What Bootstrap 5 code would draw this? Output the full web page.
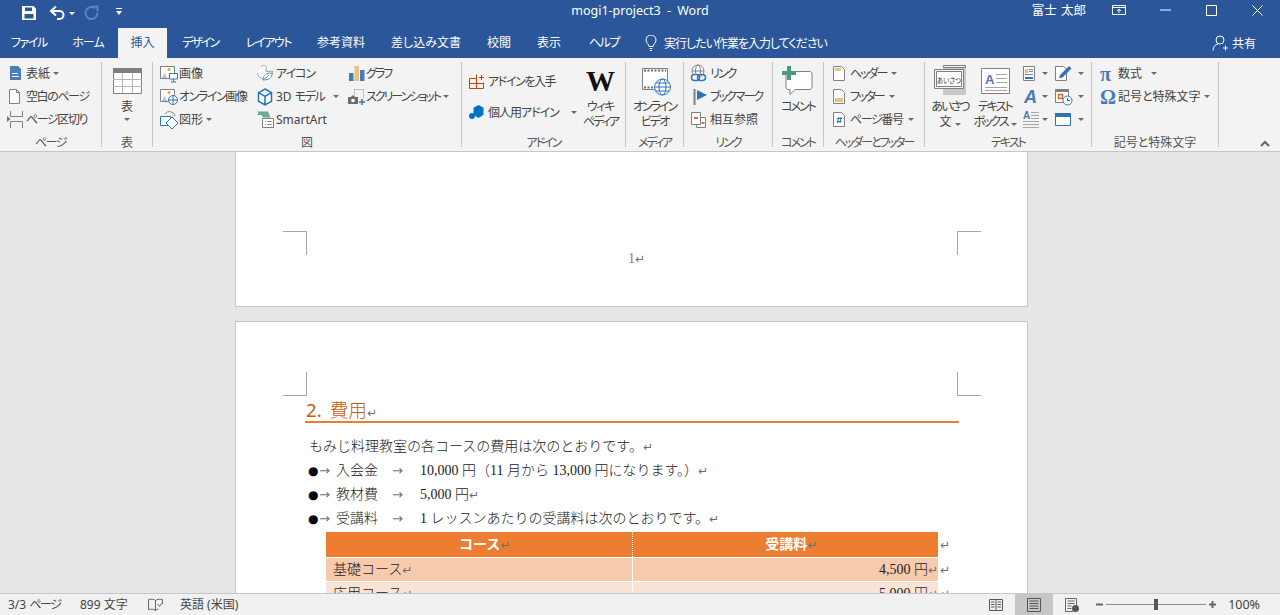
<!DOCTYPE html>
<html lang="ja">
<head>
<meta charset="utf-8">
<title>mogi1-project3 - Word</title>
<link href="https://cdn.jsdelivr.net/npm/bootstrap@5.3.0/dist/css/bootstrap.min.css" rel="stylesheet">
<style>
html,body{height:100%;overflow:hidden}
body{font-family:"Noto Sans","Noto Sans CJK JP",sans-serif;font-size:12px;line-height:15px;color:#444;font-feature-settings:"palt";background:#e6e6e6}
svg{display:block;flex-shrink:0}
.tk1{letter-spacing:-1px}.tk{letter-spacing:-1.4px}.tk2{letter-spacing:-2px}
.app-shell{height:615px}
.title-bar{height:28px;background:#2b579a;color:#fff;padding-bottom:8px}
.side-part{flex:1 1 0}
.qat-save{margin-left:21px;margin-right:12px;margin-top:6px}
.qat-undo{margin-right:3px;margin-top:6px}
.qat-redo{margin-left:9px;margin-right:17px;margin-top:6px}
.dd.dd-w{border-top-color:#fff;margin-top:6px}
.qat-more{margin-top:4px}
.title-text{font-size:12.5px;word-spacing:3px;color:#fff}
.user-name{font-size:12.5px;margin-right:10px;word-spacing:1px;font-feature-settings:normal}
.win-btn{width:46px;height:20px}
.tab-bar{height:30px;background:#2b579a;color:#fff}
.rtab{color:#fff;height:30px;line-height:30px;text-align:center;font-size:12px}
.rtab.on{background:#f3f3f3;color:#2b579a}
.tw58{width:58px}.tw60{width:60px}.tw49{width:49px}.tw66{width:66px}.tw71{width:71px}.tw74{width:74px}.tw96{width:96px}.tw50{width:50px}
.tell-me{margin-left:11px;gap:7px}
.share{margin-right:24px;gap:4px}
.ribbon{height:94px;background:#f3f3f3;border-bottom:1px solid #c6c6c6;padding-top:4px}
.rg{height:85px;border-right:1px solid #c6c6c6;flex-shrink:0}
.rg-body{flex:1 1 auto;min-height:0}
.rg-body>*{flex-shrink:0}
.rg-lbl{height:11px;line-height:14px;text-align:center;color:#555;font-size:12px;white-space:nowrap}
.g1{width:102px}.g2{width:51px}.g3{width:309px}.g4{width:164px}
.g5{width:58px}.g6{width:89px}.g7{width:51px}.g8{width:101px}.g9{width:167px}.g10{width:127px}
.g1>.rg-body,.g3>.rg-body,.g4>.rg-body{padding-left:7px}
.g6>.rg-body{padding-left:6px}
.g8>.rg-body{padding-left:9px}
.g10>.rg-body{padding-left:8px}
.ri{height:23px;white-space:nowrap}
.dd{display:inline-block;width:0;height:0;border-left:3px solid transparent;border-right:3px solid transparent;border-top:3px solid #6a6a6a;flex-shrink:0}
.col-a{width:97px}.col-b{width:91px}
.dd-5{margin-left:5px}.dd-9{margin-left:9px}.dd-3{margin-left:3px}.dd-7{margin-left:7px}.dd-1{margin-left:1px}
.big-ic{height:37px}
.rb-txt{text-align:center;white-space:nowrap}
.addin-left{width:117px}
.addin-row1{height:38px}
.addin-row2{height:24px}
.addin-gap{margin-right:4px}
.addin-dd{margin-left:12px}
.addin-w{width:29px}
.w-glyph{font-family:"Liberation Serif",serif;font-weight:700;font-size:29px;line-height:36px;color:#111;font-feature-settings:normal}
.text-a{width:50px}.text-b{width:40px;margin-right:8px}.text-c{width:32px}.text-d{width:28px}
.sym{width:18px;font-family:"Liberation Serif",serif;font-weight:700;font-size:20px;color:#4a7ab5;line-height:20px;font-feature-settings:normal}
.doc-area{flex:1 1 0;min-height:0;overflow:hidden;background:#e6e6e6;padding-right:17px}
.doc-page{width:793px;background:#fff;border:1px solid #c6c6c6;flex-shrink:0;margin-left:auto;margin-right:auto}
.page-one{height:155px;border-top:0;padding-top:79px}
.page-two{margin-top:14px;padding-top:50px;color:#222;height:400px}
.crop-row{padding:0 46px 0 47px}
.crop{width:24px;height:24px}
.crop.tl{border-top:1px solid #a6a6a6;border-right:1px solid #a6a6a6}
.crop.tr{border-top:1px solid #a6a6a6;border-left:1px solid #a6a6a6}
.crop.bl{border-bottom:1px solid #a6a6a6;border-right:1px solid #a6a6a6}
.crop.br{border-bottom:1px solid #a6a6a6;border-left:1px solid #a6a6a6}
.foot-num{font-family:"Liberation Serif","Noto Sans CJK JP",serif;font-size:14px;color:#808080;margin-top:-3px;padding-left:392px;line-height:14px}
.pm{font-family:"DejaVu Sans",sans-serif;font-size:12px;line-height:1;color:#6f6f6f;font-feature-settings:normal;font-weight:400}
.sheet{margin-left:69px;width:654px;font-family:"Liberation Serif","Noto Sans CJK JP",serif;font-size:14px;font-feature-settings:normal;font-weight:300}
.doc-h{height:27px;border-bottom:2px solid #ed7d31;color:#c55a11;font-size:18.67px;line-height:28px;white-space:nowrap;font-family:"Noto Sans","Noto Sans CJK JP",sans-serif;padding-left:1px}
.h-num{margin-right:8px;font-weight:400}
.doc-line{height:24px;line-height:24px;white-space:nowrap;padding-left:1px}
.first-line{margin-top:12px;padding-left:4px}
.bul{width:13px;padding-left:2px;color:#000;font-size:12px;font-family:"DejaVu Sans",sans-serif;font-weight:400}
.arr{width:17px;line-height:24px;font-size:13px}
.tab-arr{margin-left:14px;width:28px;line-height:24px;font-size:13px}
.fee-table{margin:1px 0 0 21px;width:632px;table-layout:fixed;font-size:14px}
.fee-table.table>:not(caption)>*>*{padding:0 7px;border:0;box-shadow:none;height:24px;line-height:21px;color:#222;vertical-align:middle}
.fee-table.table>:not(caption)>*>.c2.text-end{padding-right:0}
.fee-table .c1{width:306px;border-right:1px solid #fff!important}
.fee-table .c2{width:306px}
.fee-table .c3{width:20px;padding:0 2px!important;--bs-table-bg:#fff}
.fee-table .hd{--bs-table-bg:#ed7d31}
.fee-table.table>:not(caption)>.hd>th{color:#fff;font-weight:700;text-align:center;height:25px;border-bottom:1px solid #fff;padding-left:19px}
.fee-table.table>:not(caption)>.hd>.c1{border-right:1px dotted #fff!important}
.fee-table.table>:not(caption)>.hd>.c3{border-bottom:0;font-weight:400;text-align:left}
.fee-table .r1{--bs-table-bg:#f7caac}
.fee-table .r2{--bs-table-bg:#fbe4d5}
.fee-table.table>:not(caption)>.r1>td{border-bottom:1px solid #fff}
.fee-table.table>:not(caption)>.r1>.c3{border-bottom:0}
.status-bar{height:22px;flex-shrink:0;background:#f1f1f1;border-top:1px solid #c6c6c6;color:#444;font-size:12px}
.s-a{margin-left:8px;width:72px}.s-b{width:68px}.s-c{width:32px}
.view-a{margin-right:12px}
.view-on{width:38px;height:21px;background:#c6c6c6}
.view-c{margin:0 17px 0 12px}
.zoom-track{width:100px;height:1px;background:#8a8a8a;margin:0 3px}
.zoom-thumb{width:4px;height:11px;background:#555;margin-left:48px;margin-top:-5px}
.zoom-val{margin-left:12px;margin-right:20px;font-size:12.5px}
.up-btn{padding-right:10px;height:85px}
</style>
</head>
<body>
<div class="app-shell d-flex flex-column">

<div class="title-bar d-flex align-items-center">
  <div class="side-part d-flex align-items-center">
    <svg class="qat-save" width="16" height="16" viewBox="0 0 16 16"><path fill="#fff" fill-rule="evenodd" d="M1 1h11.5L15 3.5V15H1zM4 2.5V6h7V2.5zM3.5 9v4.5h9V9z"/></svg>
    <svg class="qat-undo" width="17" height="16" viewBox="0 0 17 16"><path d="M3 6h7.5a4 4 0 0 1 0 8H8" fill="none" stroke="#fff" stroke-width="2"/><path d="M7 1.5 2 6l5 4.5" fill="none" stroke="#fff" stroke-width="2"/></svg>
    <span class="dd dd-w"></span>
    <svg class="qat-redo" width="15" height="16" viewBox="0 0 15 16"><path d="M11 3.2A6 6 0 1 0 13.5 8" fill="none" stroke="#5f83ba" stroke-width="2"/><path d="M8.5 1.5h5v5" fill="none" stroke="#5f83ba" stroke-width="2"/></svg>
    <svg class="qat-more" width="6" height="8" viewBox="0 0 6 8"><path d="M0 .5h6" stroke="#fff"/><path d="M0 3h6L3 7z" fill="#fff"/></svg>
  </div>
  <div class="title-text">mogi1-project3 - Word</div>
  <div class="side-part d-flex align-items-center justify-content-end">
    <span class="user-name">富士 太郎</span>
    <div class="win-btn d-flex align-items-center justify-content-center"><svg width="14" height="11" viewBox="0 0 14 11"><path d="M.5.5h13v9H.5zM.5 2.5h13M7 8V4.5M5 6l2-2 2 2" fill="none" stroke="#fff"/></svg></div>
    <div class="win-btn d-flex align-items-center justify-content-center"><svg width="11" height="2" viewBox="0 0 11 2"><path d="M0 1h11" stroke="#fff"/></svg></div>
    <div class="win-btn d-flex align-items-center justify-content-center"><svg width="11" height="11" viewBox="0 0 11 11"><path d="M.5.5h10v10H.5z" fill="none" stroke="#fff"/></svg></div>
    <div class="win-btn d-flex align-items-center justify-content-center"><svg width="11" height="11" viewBox="0 0 11 11"><path d="M.5.5l10 10M10.5.5l-10 10" fill="none" stroke="#fff"/></svg></div>
  </div>
</div>

<div class="tab-bar d-flex align-items-center">
  <div class="rtab tw58 tk">ファイル</div>
  <div class="rtab tw60 tk1">ホーム</div>
  <div class="rtab tw49 on">挿入</div>
  <div class="rtab tw66 tk2">デザイン</div>
  <div class="rtab tw71 tk">レイアウト</div>
  <div class="rtab tw74">参考資料</div>
  <div class="rtab tw96">差し込み文書</div>
  <div class="rtab tw50">校閲</div>
  <div class="rtab tw50">表示</div>
  <div class="rtab tw60 tk">ヘルプ</div>
  <div class="tell-me d-flex align-items-center">
    <svg width="12" height="16" viewBox="0 0 12 16"><path d="M4 11.5C4 9 1 8.500 1 5a5 5 0 0 1 10 0c0 3.500-3 4-3 6.500zM4.500 13.500h3M5 15.500h2" fill="none" stroke="#fff"/></svg>
    <span class="tk1">実行したい作業を入力してください</span>
  </div>
  <div class="ms-auto share d-flex align-items-center">
    <svg width="16" height="16" viewBox="0 0 16 16"><circle cx="8" cy="5" r="4" fill="none" stroke="#fff"/><path d="M1 15.500c0-4 2.500-6 5-6.500M11 13h5M13.500 10.500v5" fill="none" stroke="#fff"/></svg>
    <span>共有</span>
  </div>
</div>

<div class="ribbon d-flex align-items-start">

  <div class="rg g1 d-flex flex-column">
    <div class="rg-body">
      <div class="ri d-flex align-items-center">
        <svg width="19" height="20" viewBox="0 0 19 20"><path d="M3 2h8l3 3v11H3z" fill="#4a7ebb"/><path d="M5 9l1 1 1-1 1 1 1-1 1 1 1-1M5 12.500h7" fill="none" stroke="#fff"/></svg>
        <span>表紙</span><span class="dd dd-3"></span>
      </div>
      <div class="ri d-flex align-items-center">
        <svg width="19" height="20" viewBox="0 0 19 20"><path d="M2.500 2.500h7l3 3v11h-10z" fill="#fff" stroke="#7f7f7f"/><path d="M9.500 2.500v3h3" fill="none" stroke="#7f7f7f"/></svg>
        <span class="tk">空白のページ</span>
      </div>
      <div class="ri d-flex align-items-center">
        <svg width="19" height="20" viewBox="0 0 19 20"><path d="M3.500 1v5.500h12V1M3.500 18v-6.500h12V18" fill="none" stroke="#7f7f7f"/><path d="M0 6l3.500 3L0 12z" fill="#4a7ebb"/></svg>
        <span class="tk">ページ区切り</span>
      </div>
    </div>
    <div class="rg-lbl tk">ページ</div>
  </div>

  <div class="rg g2 d-flex flex-column align-items-center">
    <div class="rg-body d-flex flex-column align-items-center">
      <div class="big-ic d-flex align-items-center">
        <svg width="29" height="26" viewBox="0 0 29 26"><path d="M.5.500h28v25H.5z" fill="#fff" stroke="#808080"/><path d="M0 0h29v5H0z" fill="#7f7f7f"/><path d="M0 11.500h29M0 18.500h29M9.500 5v20M19.500 5v20" stroke="#b5b5b5"/></svg>
      </div>
      <div class="rb-txt">表</div>
      <span class="dd mt-1"></span>
    </div>
    <div class="rg-lbl">表</div>
  </div>

  <div class="rg g3 d-flex flex-column">
    <div class="rg-body d-flex">
      <div class="col-a">
        <div class="ri d-flex align-items-center">
          <svg width="19" height="20" viewBox="0 0 19 20"><path d="M.5 2.500h14v12H.5z" fill="#fff" stroke="#808080"/><circle cx="9" cy="5.500" r="1.500" fill="#e8a23c"/><path d="M2 14l2.500-5 2.500 5z" fill="#a9c4e4"/><path d="M9.500 9.500h8v5.500h-8z" fill="#fff" stroke="#2e75b6"/><path d="M13.500 15v2.500M11 18h5" stroke="#2e75b6"/></svg>
          <span>画像</span>
        </div>
        <div class="ri d-flex align-items-center">
          <svg width="19" height="20" viewBox="0 0 19 20"><path d="M.5 2.500h14v12H.5z" fill="#fff" stroke="#808080"/><circle cx="9" cy="5.500" r="1.500" fill="#e8a23c"/><path d="M2 14l2.500-5 2.500 5z" fill="#a9c4e4"/><circle cx="13" cy="13" r="4.500" fill="#fff" stroke="#2e75b6"/><path d="M8.500 13h9M13 8.500v9" stroke="#2e75b6"/></svg>
          <span class="tk">オンライン画像</span>
        </div>
        <div class="ri d-flex align-items-center">
          <svg width="19" height="20" viewBox="0 0 19 20"><path d="M5 4a5.500 5.500 0 0 1 10 2" fill="none" stroke="#8a8a8a"/><path d="M.5 6.500h10v9H.5z" fill="#fff" stroke="#2e75b6"/><path d="M12 7l6 6-6 6-6-6z" fill="#fff" stroke="#2e75b6"/></svg>
          <span>図形</span><span class="dd dd-3"></span>
        </div>
      </div>
      <div class="col-b">
        <div class="ri d-flex align-items-center">
          <svg width="19" height="20" viewBox="0 0 19 20"><path d="M4 3a3 3 0 0 1 5.500 1c0 1-1 2-1 3 2 1 5 .500 7 0 0 5-2 8-7 8-5 0-8-3-8-6" fill="#fff" stroke="#8a8a8a" stroke-dasharray="2 .6"/><path d="M6 16c0-5 3-7 9-7 0 5-3 7-9 7zM6 16l6-5" fill="#fff" stroke="#6b97a8"/></svg>
          <span class="tk1">アイコン</span>
        </div>
        <div class="ri d-flex align-items-center">
          <svg width="19" height="20" viewBox="0 0 19 20"><path d="M8 2l6.500 3.700v8.600L8 18l-6.500-3.700V5.700zM1.500 5.700L8 9.500l6.500-3.800M8 9.500V18" fill="#fff" stroke="#1e73be" stroke-width="1.500"/></svg>
          <span>3D <span class="tk">モデル</span></span><span class="dd dd-9"></span>
        </div>
        <div class="ri d-flex align-items-center">
          <svg width="19" height="20" viewBox="0 0 19 20"><path d="M0 1.500h11l2.500 6H6L4.500 5H0l1.500-2z" fill="#6fa98f"/><path d="M5.500 8.500h11v9h-11z" fill="#fff" stroke="#808080"/><path d="M8 11.500h1M8 14.500h1M10.500 11.500h4M10.500 14.500h4" stroke="#808080"/></svg>
          <span>SmartArt</span>
        </div>
      </div>
      <div>
        <div class="ri d-flex align-items-center">
          <svg width="18" height="20" viewBox="0 0 18 20"><path d="M1 9h4.500v8H1zM12 6h4.500v11H12z" fill="#4a7ab5"/><path d="M6.500 2H11v15H6.500z" fill="#e8c27e"/></svg>
          <span class="tk2">グラフ</span>
        </div>
        <div class="ri d-flex align-items-center">
          <svg width="18" height="20" viewBox="0 0 18 20"><path d="M6.500 2.500h9v9" fill="none" stroke="#8a8a8a" stroke-dasharray="1 1"/><path d="M6.500 2.500v6" stroke="#8a8a8a" stroke-dasharray="1 1"/><path d="M0 10h3l1-1.500h2l1 1.500h3v7H0z" fill="#6d6d6d"/><circle cx="5" cy="13.500" r="1.800" fill="#fff"/><path d="M11 15h6M14 12v6" stroke="#2e75b6" stroke-width="1.500"/></svg>
          <span class="tk2">スクリーンショット</span><span class="dd dd-3"></span>
        </div>
      </div>
    </div>
    <div class="rg-lbl">図</div>
  </div>

  <div class="rg g4 d-flex flex-column">
    <div class="rg-body d-flex">
      <div class="addin-left">
        <div class="addin-row1 d-flex align-items-center">
          <svg class="addin-gap" width="15" height="15" viewBox="0 0 15 15"><path d="M.5 4.500h7v-4M7.500 14.500v-10M.5 9.500h14M.5 4.500v10h14v-6M10 3.500h5M12.500 1v5" fill="none" stroke="#d83b01"/></svg>
          <span class="tk">アドインを入手</span>
        </div>
        <div class="addin-row2 d-flex align-items-center">
          <svg class="addin-gap" width="15" height="15" viewBox="0 0 15 15"><path d="M9.500 0l5 2.800v7L9.500 13l-5-3.200v-7z" fill="#0072c6"/><circle cx="3" cy="11" r="3" fill="#0072c6"/></svg>
          <span class="tk1">個人用アドイン</span><span class="dd addin-dd"></span>
        </div>
      </div>
      <div class="addin-w d-flex flex-column align-items-center">
        <div class="big-ic d-flex align-items-center w-glyph">W</div>
        <div class="rb-txt tk">ウィキ</div>
        <div class="rb-txt tk2">ペディア</div>
      </div>
    </div>
    <div class="rg-lbl tk2">アドイン</div>
  </div>

  <div class="rg g5 d-flex flex-column align-items-center">
    <div class="rg-body d-flex flex-column align-items-center">
      <div class="big-ic d-flex align-items-center ms-1">
        <svg width="29" height="30" viewBox="0 0 29 30"><path d="M.5 2.500h25v21H.5z" fill="#fff" stroke="#808080"/><path d="M2 4.500h22M2 21.500h12" stroke="#6d6d6d" stroke-width="2" stroke-dasharray="2 1.500"/><circle cx="20.500" cy="21" r="8" fill="#fff" stroke="#2e75b6"/><ellipse cx="20.500" cy="21" rx="3.500" ry="8" fill="none" stroke="#2e75b6"/><path d="M12.500 21h16M14 17h13M14 25h13" stroke="#2e75b6"/></svg>
      </div>
      <div class="rb-txt tk2">オンライン</div>
      <div class="rb-txt tk2">ビデオ</div>
    </div>
    <div class="rg-lbl tk2">メディア</div>
  </div>

  <div class="rg g6 d-flex flex-column">
    <div class="rg-body">
      <div class="ri d-flex align-items-center">
        <svg width="20" height="20" viewBox="0 0 20 20"><circle cx="8" cy="7" r="6" fill="#fff" stroke="#808080"/><ellipse cx="8" cy="7" rx="2.500" ry="6" fill="none" stroke="#808080"/><path d="M2 7h12" stroke="#808080"/><rect x="1.500" y="10.500" width="8" height="6" rx="3" fill="#fff" stroke="#2e75b6" stroke-width="1.500"/><rect x="7.500" y="10.500" width="8" height="6" rx="3" fill="none" stroke="#2e75b6" stroke-width="1.500"/></svg>
        <span class="tk2">リンク</span>
      </div>
      <div class="ri d-flex align-items-center">
        <svg width="20" height="20" viewBox="0 0 20 20"><path d="M4.500 2v16" stroke="#808080" stroke-width="2"/><path d="M7 3l10 5-10 5z" fill="#2e75b6"/></svg>
        <span class="tk2">ブックマーク</span>
      </div>
      <div class="ri d-flex align-items-center">
        <svg width="20" height="20" viewBox="0 0 20 20"><path d="M1.500 2.500h9v12h-9zM10.500 7.500h5v10h-9v-3" fill="#fff" stroke="#808080"/><path d="M4 8h4" stroke="#d83b01" stroke-width="1.500"/><path d="M11.500 13h3" stroke="#d83b01" stroke-width="1.500"/></svg>
        <span>相互参照</span>
      </div>
    </div>
    <div class="rg-lbl tk2">リンク</div>
  </div>

  <div class="rg g7 d-flex flex-column align-items-center">
    <div class="rg-body d-flex flex-column align-items-center">
      <div class="big-ic d-flex align-items-center">
        <svg width="31" height="30" viewBox="0 0 31 30"><path d="M5.500 5.500h23l1.500 1.500v15l-1.500 1.500H13l-5 5v-5H5.500L4 22V7z" fill="#fff" stroke="#808080"/><path d="M5 0h4v5h5v4H9v5H5V9H0V5h5z" fill="#4b9a7c"/></svg>
      </div>
      <div class="rb-txt tk2">コメント</div>
    </div>
    <div class="rg-lbl tk2">コメント</div>
  </div>

  <div class="rg g8 d-flex flex-column">
    <div class="rg-body">
      <div class="ri d-flex align-items-center">
        <svg width="17" height="20" viewBox="0 0 17 20"><path d="M.5 2.500h8l3 3v11H.5z" fill="#fff" stroke="#808080"/><path d="M2 4h6v3H2z" fill="#e8c27e"/></svg>
        <span class="tk2">ヘッダー</span><span class="dd dd-5"></span>
      </div>
      <div class="ri d-flex align-items-center">
        <svg width="17" height="20" viewBox="0 0 17 20"><path d="M.5 2.500h8l3 3v11H.5z" fill="#fff" stroke="#808080"/><path d="M2 11h8v4H2z" fill="#e8c27e"/></svg>
        <span class="tk2">フッター</span><span class="dd dd-5"></span>
      </div>
      <div class="ri d-flex align-items-center">
        <svg width="17" height="20" viewBox="0 0 17 20"><path d="M.5 2.500h8l3 3v11H.5z" fill="#fff" stroke="#808080"/><path d="M4 8.500h5M3.500 11.500h5M5.500 7l-1 6M8 7l-1 6" fill="none" stroke="#2e75b6"/></svg>
        <span class="tk">ページ番号</span><span class="dd dd-5"></span>
      </div>
    </div>
    <div class="rg-lbl tk2">ヘッダーとフッター</div>
  </div>

  <div class="rg g9 d-flex flex-column">
    <div class="rg-body d-flex">
      <div class="text-a d-flex flex-column align-items-center">
        <div class="big-ic d-flex align-items-center">
          <svg width="33" height="31" viewBox="0 0 33 31"><path d="M9 0h23v30H9z" fill="#c8c8c8"/><path d="M9.500.500h22v2h-22z" fill="#f3f3f3" stroke="#808080"/><path d="M.5 4.500h29v19H.5z" fill="#f3f3f3" stroke="#808080"/><path d="M2.500 6.500h25v15h-25z" fill="#fff" stroke="#808080"/><text x="15" y="17.500" font-size="6.500" text-anchor="middle" fill="#333" font-family="Noto Sans CJK JP">あいさつ</text></svg>
        </div>
        <div class="rb-txt tk2">あいさつ</div>
        <div class="rb-txt">文<span class="dd dd-3"></span></div>
      </div>
      <div class="text-b d-flex flex-column align-items-center">
        <div class="big-ic d-flex align-items-center">
          <svg width="29" height="26" viewBox="0 0 29 26"><path d="M.5.500h28v25H.5z" fill="#fff" stroke="#808080"/><text x="4" y="16" font-size="13" font-weight="700" fill="#4a7ab5" font-family="Liberation Sans">A</text><path d="M15 6.500h11M15 10.500h11M15 14.500h11M4 19.500h22M4 22.500h22" stroke="#a6a6a6"/></svg>
        </div>
        <div class="rb-txt tk2">テキスト</div>
        <div class="rb-txt"><span class="tk2">ボックス</span><span class="dd dd-3"></span></div>
      </div>
      <div class="text-c">
        <div class="ri d-flex align-items-center">
          <svg width="19" height="20" viewBox="0 0 19 20"><path d="M.5 2.500h11v14H.5z" fill="#fff" stroke="#808080"/><path d="M2 5h3v4H2z" fill="#e8c27e"/><path d="M6 5.500h4M6 7.500h4M2 10.500h8" stroke="#808080"/><path d="M2 13h8v2H2z" fill="#2e75b6"/></svg>
          <span class="dd"></span>
        </div>
        <div class="ri d-flex align-items-center">
          <svg width="19" height="20" viewBox="0 0 19 20"><text x="1" y="16" font-size="18" font-weight="700" font-style="italic" fill="#4a7ab5" font-family="Liberation Sans">A</text></svg>
          <span class="dd"></span>
        </div>
        <div class="ri d-flex align-items-center">
          <svg width="19" height="20" viewBox="0 0 19 20"><text x="0" y="9" font-size="10" font-weight="700" fill="#4a7ab5" font-family="Liberation Sans">A</text><path d="M8 2.500h8M8 5.500h8M8 8.500h8M0 11.500h16M0 14.500h16M0 17.500h16" stroke="#a6a6a6"/></svg>
          <span class="dd"></span>
        </div>
      </div>
      <div class="text-d">
        <div class="ri d-flex align-items-center">
          <svg width="22" height="20" viewBox="0 0 22 20"><path d="M.5 2.500h8l3 3v11H.5z" fill="#fff" stroke="#808080"/><path d="M4 14l1-3 9-9 2.500 2.500-9 9z" fill="#2e75b6"/></svg>
          <span class="dd dd-1"></span>
        </div>
        <div class="ri d-flex align-items-center">
          <svg width="22" height="20" viewBox="0 0 22 20"><path d="M.5 2.500h13v13H.5z" fill="#fff" stroke="#808080"/><path d="M.5 2h13v3H.5z" fill="#7f7f7f"/><path d="M3.500 7.500h4v4h-4z" fill="none" stroke="#d86a1a" stroke-width="1.500"/><circle cx="12.500" cy="13.500" r="4.500" fill="#fff" stroke="#2e75b6"/><path d="M12.500 11v2.500h2.500" fill="none" stroke="#2e75b6"/></svg>
          <span class="dd dd-1"></span>
        </div>
        <div class="ri d-flex align-items-center">
          <svg width="22" height="20" viewBox="0 0 22 20"><path d="M.5 3.500h15v12H.5z" fill="#fff" stroke="#2e75b6"/><path d="M0 3h16v4H0z" fill="#2e75b6"/></svg>
          <span class="dd dd-1"></span>
        </div>
      </div>
    </div>
    <div class="rg-lbl tk2">テキスト</div>
  </div>

  <div class="rg g10 d-flex flex-column">
    <div class="rg-body">
      <div class="ri d-flex align-items-center"><span class="sym">π</span><span>数式</span><span class="dd dd-9"></span></div>
      <div class="ri d-flex align-items-center"><span class="sym">Ω</span><span>記号と特殊文字</span><span class="dd dd-3"></span></div>
    </div>
    <div class="rg-lbl">記号と特殊文字</div>
  </div>

  <div class="ms-auto up-btn d-flex align-items-end">
    <svg width="10" height="7" viewBox="0 0 10 7"><path d="M1 6l4-4 4 4" fill="none" stroke="#666" stroke-width="2"/></svg>
  </div>
</div>

<div class="doc-area d-flex flex-column">
  <div class="doc-page page-one">
    <div class="crop-row d-flex justify-content-between">
      <div class="crop tl"></div><div class="crop tr"></div>
    </div>
    <div class="foot-num">1<span class="pm">↵</span></div>
  </div>
  <div class="doc-page page-two">
    <div class="crop-row d-flex justify-content-between">
      <div class="crop bl"></div><div class="crop br"></div>
    </div>
    <div class="sheet">
      <div class="doc-h"><span class="h-num">2.</span>費用<span class="pm">↵</span></div>
      <div class="doc-line first-line">もみじ料理教室の各コースの費用は次のとおりです。<span class="pm">↵</span></div>
      <div class="doc-line d-flex"><span class="bul">●</span><span class="pm arr">→</span><span>入会金</span><span class="pm tab-arr">→</span><span>10,000 円（11 月から 13,000 円になります。）<span class="pm">↵</span></span></div>
      <div class="doc-line d-flex"><span class="bul">●</span><span class="pm arr">→</span><span>教材費</span><span class="pm tab-arr">→</span><span>5,000 円<span class="pm">↵</span></span></div>
      <div class="doc-line d-flex"><span class="bul">●</span><span class="pm arr">→</span><span>受講料</span><span class="pm tab-arr">→</span><span>1 レッスンあたりの受講料は次のとおりです。<span class="pm">↵</span></span></div>
      <table class="table table-borderless fee-table">
        <tbody>
          <tr class="hd"><th class="c1">コース<span class="pm">↵</span></th><th class="c2">受講料<span class="pm">↵</span></th><th class="c3"><span class="pm">↵</span></th></tr>
          <tr class="r1"><td class="c1">基礎コース<span class="pm">↵</span></td><td class="c2 text-end">4,500 円<span class="pm">↵</span></td><td class="c3"><span class="pm">↵</span></td></tr>
          <tr class="r2"><td class="c1">応用コース<span class="pm">↵</span></td><td class="c2 text-end">5,000 円<span class="pm">↵</span></td><td class="c3"><span class="pm">↵</span></td></tr>
        </tbody>
      </table>
    </div>
  </div>
</div>

<div class="status-bar d-flex align-items-center">
  <span class="s-a">3/3 <span class="tk">ページ</span></span>
  <span class="s-b">899 文字</span>
  <span class="s-c"><svg width="15" height="14" viewBox="0 0 15 14"><path d="M7.500 2.500C6 1 3 1 .5 1.500v10c2.500-.5 5.500-.5 7 1 1-1 2-1.300 3-1.300M7.500 2.500V12M7.500 2.500C9 1 12 1 14.500 1.500V6" fill="none" stroke="#666"/><path d="M9.500 6l2 2.500 3-4" fill="none" stroke="#666"/></svg></span>
  <span>英語 (米国)</span>
  <div class="ms-auto d-flex align-items-center">
    <svg class="view-a" width="14" height="14" viewBox="0 0 14 14"><path d="M.5 1.500h13v11H.5zM7 1.500v11M2 4h3.500M2 6.500h3.500M2 9h3.500M8.500 4H12M8.500 6.500H12M8.500 9H12" fill="none" stroke="#555"/></svg>
    <div class="view-on d-flex align-items-center justify-content-center"><svg width="14" height="14" viewBox="0 0 14 14"><path d="M.5.500h13v13H.5zM2.500 3h9M2.500 5.500h9M2.500 8h9M2.500 10.500h9" fill="none" stroke="#555"/></svg></div>
    <svg class="view-c" width="14" height="14" viewBox="0 0 14 14"><path d="M8 13.500H.5V.5h11V7M2.500 3h7M2.500 5.500h7M2.500 8h4M2.500 10.500h4" fill="none" stroke="#666"/><circle cx="10.500" cy="10.500" r="3.500" fill="#555"/></svg>
    <svg width="7" height="7" viewBox="0 0 7 7"><path d="M0 3.500h7" stroke="#666" stroke-width="2"/></svg>
    <div class="zoom-track"><div class="zoom-thumb"></div></div>
    <svg width="7" height="7" viewBox="0 0 7 7"><path d="M0 3.500h7M3.500 0v7" stroke="#666" stroke-width="2"/></svg>
    <span class="zoom-val">100%</span>
  </div>
</div>

</div>
<script src="https://cdn.jsdelivr.net/npm/bootstrap@5.3.0/dist/js/bootstrap.bundle.min.js"></script>
</body>
</html>
